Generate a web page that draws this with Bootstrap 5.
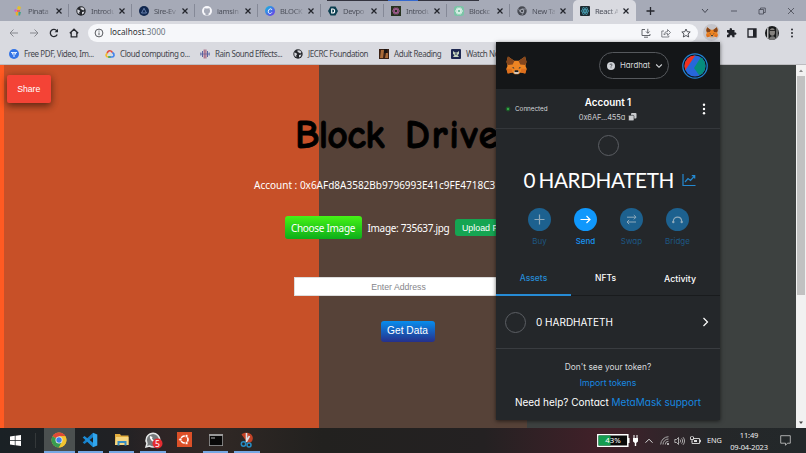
<!DOCTYPE html>
<html lang="en">
<head>
  <meta charset="UTF-8" />
  <meta name="viewport" content="width=device-width, initial-scale=1" />
  <title>React App</title>
  <link href="https://cdn.jsdelivr.net/npm/bootstrap@5.3.0/dist/css/bootstrap.min.css" rel="stylesheet" />
  <style>
    body { width: 806px; height: 453px; font-family: "Noto Sans", "Open Sans", sans-serif; font-size: 8px; line-height: 1; }
    svg { display: block; flex: none; overflow: visible; }

    /* browser chrome */
    .tab-strip { height: 21px; padding-left: 6px; background: #a6aab7; }
    .browser-tab { width: 63px; flex: none; padding-left: 7px; height: 21px; color: #4d505b; }
    .browser-tab::after { content: ""; width: 1px; height: 13px; background: #858997; margin-left: 5.5px; }
    .browser-tab .tab-label { width: 23px; flex: none; margin: 0 3.5px 0 5px; height: 12px; font-size: 7.6px; line-height: 12px; white-space: nowrap; letter-spacing: -.35px;
      -webkit-mask-image: linear-gradient(90deg, #000 60%, rgba(0,0,0,.2)); mask-image: linear-gradient(90deg, #000 60%, rgba(0,0,0,.2)); }
    .browser-tab.current { background: #d9dae0; border-radius: 5px 5px 0 0; }
    .browser-tab.current::after, .browser-tab.before-current::after { background: transparent; }
    .new-tab { margin-left: 9px; }
    .other-window { top: 0; left: 327px; width: 152px; height: 1px; background: linear-gradient(90deg, #34343f 61px, #3569cf 61px 91px, #34343f 91px); }
    .window-buttons { gap: 18.6px; padding-right: 10px; }
    .address-row { height: 23px; background: #d9dae0; padding-left: 9px; }
    .nav-icons { gap: 10px; }
    .address-box { width: 610px; height: 18px; margin-left: 9px; padding: 0 7px 0 6px; border-radius: 9px; background: #f6f7fa; }
    .address-text { font-size: 8.2px; margin-left: 6px; color: #303238; }
    .box-icons { gap: 10px; }
    .ext-icons { margin-left: 5px; }
    .ext-fox { width: 17px; height: 17px; background: #c4c4ca; }
    .ext-puzzle { margin-left: 6px; }
    .ext-panel { margin-left: 10px; }
    .ext-profile { margin-left: 8px; }
    .ext-more { margin-left: 11px; }
    .bookmarks { height: 21px; padding-left: 9px; background: #d9dae0; color: #45474e; border-bottom: 1px solid #bcbcc0; }
    .bookmark { gap: 5px; flex: none; white-space: nowrap; letter-spacing: -.42px; }
    .w96 { width: 96px; } .w95 { width: 95px; } .w93 { width: 93px; } .w86 { width: 86px; } .w72 { width: 72px; }

    /* dapp page */
    .dapp { height: 363px; background: linear-gradient(90deg, #ff5a22 4.5px, #c75028 4.5px 319.5px, #564238 319.5px 527px, #3d4140 527px); }
    .dapp-body { padding-left: 7px; }
    .share-btn { width: 43.5px; height: 28px; margin-top: 10px; border-radius: 2px; background: #f44336; box-shadow: 0 3px 7px rgba(0,0,0,.42), 0 1px 10px rgba(0,0,0,.2); color: #fff; font: 8.7px "Liberation Sans", sans-serif; }
    .block-title { margin: 7px 0 0 288px; height: 50px; font: 700 40px/50px "Comic Sans MS", "Comic Neue", Lato, sans-serif; color: #000; white-space: nowrap; -webkit-text-stroke: .8px #000; paint-order: stroke; stroke-linejoin: round; }
    .block-title .word-1 { letter-spacing: -.8px; }
    .block-title .word-2 { letter-spacing: 1.6px; margin-left: 7px; }
    .account-line { margin: 18px 0 0 247px; height: 14px; line-height: 14px; font-size: 10px; color: #fff; white-space: nowrap; }
    .upload-row { margin: 23.5px 0 0 277.5px; height: 24px; font-size: 10px; color: #fff; white-space: nowrap; }
    .choose-btn { width: 77px; height: 23px; border-radius: 3px; background: linear-gradient(#46f316, #0cad1a); letter-spacing: -.3px; }
    .picked-file { margin-left: 6px; letter-spacing: -.32px; }
    .upload-btn { width: 62px; height: 17px; border-radius: 3px; background: #15a552; margin-left: 6px; padding: 0 0 0 6.5px; font: 8.9px "Liberation Sans", sans-serif; }
    .addr-input { width: 209px; height: 19px; margin: 37.5px 0 0 287px; border: 1px solid #ddd; border-radius: 0; padding: 0; text-align: center; font: 8.7px "Liberation Sans", sans-serif; }
    .addr-input::placeholder { color: #85858a; }
    .get-btn { width: 54px; height: 21px; margin: 25px 0 0 373.5px; border-radius: 3px; background: linear-gradient(#078ded, #26308b); color: #fff; font: 10.2px/17px "Liberation Sans", sans-serif; padding: 0 0 3px; }
    .page-scroll { width: 10px; background: #f1f1f1; }
    .page-scroll .thumb { height: 219px; margin: 0 1px; background: #c1c1c1; }

    /* wallet popup */
    .wallet { left: 496px; top: 42px; width: 224px; height: 378px; background: #24272a; color: #fff; font-family: Inter, Lato, sans-serif; font-feature-settings: "cv11", "ss03"; box-shadow: 0 1px 4px rgba(0,0,0,.6); }
    .wallet-head { height: 47px; background: #141618; padding: 0 12px 0 10px; }
    .network { width: 70px; height: 27px; border: 1px solid #55585c; margin-left: 72px; padding: 0 5px 0 7px; font-size: 7.9px; color: #d6d9dc; letter-spacing: -.05px; }
    .network-name { margin-left: 5px; }
    .identicon { width: 26px; height: 26px; margin-left: 12.5px; }
    .wallet-account { height: 40px; border-bottom: 1px solid #34373b; }
    .connected { width: 76px; padding: 1px 0 0 9px; gap: 4px; font-size: 6.3px; color: #d6d9dc; }
    .acct { width: 72px; padding-top: 2px; }
    .acct-name { font-size: 9.8px; font-weight: 600; }
    .acct-hash { font-size: 7.5px; gap: 3px; color: #c9cbce; margin-top: 6px; letter-spacing: -.12px; }
    .acct-menu { margin-right: 14px; }
    .token-ring { width: 21px; height: 21px; border: 1px solid #5b5e63; border-radius: 50%; }
    .main-token { margin-top: 6px; }
    .balance { height: 28px; margin-top: 10px; font: 20.7px/28px Lato, sans-serif; white-space: nowrap; padding-left: 27.5px; }
    .balance-unit { letter-spacing: -.35px; margin-left: 3px; }
    .actions { margin: 14px 20px 0; padding-left: .5px; }
    .action { width: 46px; flex: none; gap: 6px; font-size: 8px; color: #1d5885; }
    .action .disc { width: 23px; height: 23px; border-radius: 50%; background: #1d618f; color: #8faabb; }
    .action.live { color: #1795f4; font-weight: 500; }
    .action.live .disc { background: #1098fc; color: #fff; }
    .wallet-tabs { height: 37px; margin-top: 14px; border-bottom: 1px solid #191b1d; font-size: 8.5px; font-weight: 500; }
    .wallet-tabs div { width: 75px; text-align: center; line-height: 39px; border-bottom: 2px solid transparent; height: 37px; }
    .wallet-tabs .tab-nfts { width: 69px; }
    .wallet-tabs .tab-activity { width: 80px; font-size: 8.8px; }
    .wallet-tabs .chosen { color: #268bd5; border-color: #268bd5; }
    .asset { height: 53px; gap: 10px; padding: 0 11px 0 9px; border-bottom: 1px solid #393c40; font-size: 10px; }
    .foot-q { margin-top: 13px; font-size: 8.4px; color: #d6d9dc; line-height: 11px; }
    .foot-import { margin-top: 5px; font-size: 8.7px; line-height: 11px; color: #1787e0; }
    .foot-help { margin-top: 6px; font-size: 10px; line-height: 14px; white-space: nowrap; }
    .foot-help span { color: #1787e0; }

    /* taskbar */
    .taskbar { height: 25px; background: linear-gradient(90deg, #1a2125, #202124 14%, #2d2425 20%, #302825 27%, #22211f 40%, #242122 60%, #422029 75%, #34242a 81%, #252729 88%, #23282a); color: #eee; }
    .start { width: 43.5px; padding-left: 10px; }
    .start-line { width: 1px; height: 15px; background: #34383a; }
    .task { width: 31.3px; height: 25px; border-bottom: 2px solid transparent; position: relative; }
    .task.running::after { content: ""; position: absolute; bottom: -2px; left: 3px; right: 3px; height: 2px; background: #76a8e4; }
    .task.active { background: #4b5050; }
    .task.active::after { left: 0; right: 0; }
    .tray { width: 209px; }
    .tray-plug { margin-left: 2px; }
    .tray-up { margin-left: 6px; }
    .tray-wifi { margin-left: 7px; }
    .tray-item { margin-left: 5px; }
    .tray-lang { width: 15px; margin-left: 6px; font-size: 7.3px; letter-spacing: -.1px; }
    .clock { width: 44px; margin-left: 5px; text-align: center; line-height: 12px; font-size: 7.5px; letter-spacing: -.15px; white-space: nowrap; }
    .tray-note { margin-right: 15px; }
  </style>
</head>
<body class="overflow-hidden position-relative d-flex flex-column m-0">

  <svg width="0" height="0" class="position-absolute">
    <defs>
      <symbol id="x" viewBox="0 0 8 8"><path d="M1.5 1.5l5 5M6.5 1.5l-5 5" stroke="#22242b" stroke-width="1.2" /></symbol>
      <symbol id="globe" viewBox="0 0 10 10"><circle cx="5" cy="5" r="4.7" fill="#24262b" /><path d="M1.2 3.5l2 .4 1 1.4-1 1 .2 2L1.5 6.8zM4.5 1.2l2.5.2L8.5 3 7.300 4.500 5.800 3.500 4.600 3zM6 6l2.500-.5-.8 2L6 8.500z" fill="#d5d6dc" /></symbol>
      <symbol id="fox" viewBox="0 0 22 20">
        <path d="M2 .5L8.500 5h5L20 .5 21.500 6l-1 4.500 1.200 3-1.500 5-4.800-1.200-2.400 1.900H9l-2.400-1.900-4.800 1.200-1.500-5 1.200-3L.5 6z" fill="#ec8423" />
        <path d="M2 .5L8.800 5.300 7 9 1.600 9.500.5 6zM20 .5l-6.800 4.800L15 9l5.400.5L21.500 6z" fill="#84461d" />
        <path d="M.3 13.500h5.500l.8 3.800-4.800 1.200zM21.700 13.500h-5.500l-.8 3.800 4.800 1.200z" fill="#dd6f1d" />
        <path d="M6 12.300l2.700 1.200-.4-1.700zM16 12.300l-2.700 1.200.4-1.700z" fill="#233447" />
        <path d="M8 16.500l1.200-1h3.600l1.200 1-1.200 2.500H9.200z" fill="#d2c5b8" /><path d="M9.300 15h3.400l.4 1.800H8.900z" fill="#1b1b1b" />
      </symbol>
      <symbol id="openai" viewBox="0 0 10 10"><g fill="none" stroke="currentColor" stroke-width=".8"><ellipse cx="5" cy="5" rx="3.500" ry="1.700" /><ellipse cx="5" cy="5" rx="3.500" ry="1.700" transform="rotate(60 5 5)" /><ellipse cx="5" cy="5" rx="3.500" ry="1.700" transform="rotate(120 5 5)" /></g></symbol>
    </defs>
  </svg>

  <!-- tabs -->
  <div class="tab-strip d-flex align-items-center flex-shrink-0">
    <div class="browser-tab d-flex align-items-center">
      <svg width="10" height="10" viewBox="0 0 10 10"><path d="M5 0l3 1-1 3-3-1z" fill="#e6c02c" /><path d="M2 3l2 1-1 2-2-1z" fill="#d55fc0" /><path d="M4 4l3 0 0 2-3 0z" fill="#e66b54" /><path d="M2.500 6h2.500v3.500H3z" fill="#e5b22c" /><path d="M5.500 6H8L7 9.500H5.500z" fill="#42a08b" /></svg>
      <div class="tab-label">Pinata</div><svg width="8" height="8"><use href="#x" /></svg>
    </div>
    <div class="browser-tab d-flex align-items-center">
      <svg width="10" height="10"><use href="#globe" /></svg>
      <div class="tab-label">Introdu</div><svg width="8" height="8"><use href="#x" /></svg>
    </div>
    <div class="browser-tab d-flex align-items-center">
      <svg width="10" height="10" viewBox="0 0 10 10"><circle cx="5" cy="5" r="5" fill="#12284f" /><path d="M5 2.300L7.500 7h-5z" fill="none" stroke="#8aa4d4" stroke-width=".7" /></svg>
      <div class="tab-label">Sire-Ev</div><svg width="8" height="8"><use href="#x" /></svg>
    </div>
    <div class="browser-tab d-flex align-items-center">
      <svg width="10" height="10" viewBox="0 0 10 10"><circle cx="5" cy="5" r="5" fill="#f8f8fb" /><path d="M3.500 9.500V7.500C1.500 7 1.800 3.800 2.500 3.300V2l1.300.6h2.400L7.500 2v1.300C8.200 3.800 8.500 7 6.500 7.500v2z" fill="#a6aab7" /></svg>
      <div class="tab-label">iamsin</div><svg width="8" height="8"><use href="#x" /></svg>
    </div>
    <div class="browser-tab d-flex align-items-center">
      <svg width="10" height="10" viewBox="0 0 10 10"><defs><linearGradient id="cv" x2="1" y2="1"><stop stop-color="#13bfe0" /><stop offset="1" stop-color="#7130e8" /></linearGradient></defs><circle cx="5" cy="5" r="5" fill="url(#cv)" /><path d="M6.800 3.800C6.500 2 3.300 2.800 3.300 5.500s2.500 2.500 3.500 1" fill="none" stroke="#fff" /></svg>
      <div class="tab-label">BLOCK</div><svg width="8" height="8"><use href="#x" /></svg>
    </div>
    <div class="browser-tab d-flex align-items-center">
      <svg width="10" height="10" viewBox="0 0 10 10"><path d="M2.500.5h5L10 5 7.500 9.500h-5L0 5z" fill="#0c3f50" /><path d="M3.700 3v4h1c2.600 0 2.600-4 0-4z" fill="none" stroke="#fff" stroke-width="1.100" /></svg>
      <div class="tab-label">Devpo</div><svg width="8" height="8"><use href="#x" /></svg>
    </div>
    <div class="browser-tab d-flex align-items-center">
      <svg width="10" height="10" viewBox="0 0 10 10" color="#ad619a"><path d="M0 0h10v10H0z" fill="#26321f" /><use href="#openai" /></svg>
      <div class="tab-label">Introdu</div><svg width="8" height="8"><use href="#x" /></svg>
    </div>
    <div class="browser-tab d-flex align-items-center">
      <svg width="10" height="10" viewBox="0 0 10 10" color="#e5f5ee"><rect width="10" height="10" rx="2.500" fill="#7cc4a7" /><use href="#openai" /></svg>
      <div class="tab-label">Blockc</div><svg width="8" height="8"><use href="#x" /></svg>
    </div>
    <div class="browser-tab before-current d-flex align-items-center">
      <svg width="10" height="10" viewBox="0 0 10 10"><circle cx="5" cy="5" r="4.700" fill="#484b53" /><path d="M5 3h4M3.300 6L1.300 2.600M6.700 6L4.700 9.500" stroke="#a6aab7" stroke-width=".7" /><circle cx="5" cy="5" r="1.800" fill="#484b53" stroke="#c3c6d0" stroke-width=".8" /></svg>
      <div class="tab-label">New Ta</div><svg width="8" height="8"><use href="#x" /></svg>
    </div>
    <div class="browser-tab current d-flex align-items-center">
      <svg width="10" height="10" viewBox="0 0 10 10"><rect width="10" height="10" rx="1" fill="#1e2a31" /><g fill="none" stroke="#4fb6cb" stroke-width=".6"><ellipse cx="5" cy="5" rx="4" ry="1.500" /><ellipse cx="5" cy="5" rx="4" ry="1.500" transform="rotate(60 5 5)" /><ellipse cx="5" cy="5" rx="4" ry="1.500" transform="rotate(120 5 5)" /></g><circle cx="5" cy="5" r=".8" fill="#4fb6cb" /></svg>
      <div class="tab-label">React A</div><svg width="8" height="8"><use href="#x" /></svg>
    </div>
    <svg class="new-tab" width="11" height="10" viewBox="0 0 11 10"><path d="M1.500 5h8M5.500 1v8" stroke="#24262d" stroke-width="1.300" /></svg>
    <div class="window-buttons d-flex align-items-center ms-auto">
      <svg width="10" height="10" viewBox="0 0 10 10"><path d="M2 3l3 3.500L8 3" fill="none" stroke="#454853" /></svg>
      <svg width="10" height="10" viewBox="0 0 10 10"><path d="M2 5h6" stroke="#454853" stroke-width=".8" /></svg>
      <svg width="10" height="10" viewBox="0 0 10 10"><path d="M2 3.500h4.500V8H2zM3.500 3.500V2h4.800v4.500H6.500" fill="none" stroke="#454853" stroke-width=".8" /></svg>
      <svg width="10" height="10" viewBox="0 0 10 10"><path d="M2 2l6 6M8 2L2 8" stroke="#454853" stroke-width=".8" /></svg>
    </div>
  </div>
  <div class="other-window position-absolute"></div>

  <!-- address bar -->
  <div class="address-row d-flex align-items-center flex-shrink-0">
    <div class="nav-icons d-flex align-items-center">
      <svg width="10" height="10" viewBox="0 0 10 10"><path d="M9 5H1M4.500 1.500L1 5l3.500 3.500" fill="none" stroke="#85878d" /></svg>
      <svg width="10" height="10" viewBox="0 0 10 10"><path d="M1 5h8M5.500 1.500L9 5 5.500 8.500" fill="none" stroke="#85878d" /></svg>
      <svg width="10" height="10" viewBox="0 0 10 10"><path d="M8.200 6.500A3.600 3.600 0 1 1 7.800 2.800" fill="none" stroke="#26282e" stroke-width="1.300" /><path d="M9 .8v3.400H5.600z" fill="#26282e" /></svg>
      <svg width="10" height="10" viewBox="0 0 10 10"><path d="M.8 5.300L5 1.200l4.200 4.100M2.200 4.500v4.300h5.600V4.500" fill="none" stroke="#26282e" stroke-width="1.300" /></svg>
    </div>
    <div class="address-box d-flex align-items-center">
      <svg width="10" height="10" viewBox="0 0 10 10"><circle cx="5" cy="5" r="3.900" fill="none" stroke="#45474d" stroke-width=".9" /><path d="M5 4.500v2.700M5 2.600v1" stroke="#45474d" stroke-width=".9" /></svg>
      <div class="address-text">localhost<span class="text-secondary">:3000</span></div>
      <div class="box-icons d-flex ms-auto">
        <svg width="10" height="10" viewBox="0 0 10 10"><path d="M4 1.500H1v6h8V6M3 9.200h4M6.800.8v4.400M5 3.500l1.800 1.800 1.800-1.800" fill="none" stroke="#54565c" stroke-width=".9" /></svg>
        <svg width="10" height="10" viewBox="0 0 10 10"><path d="M3 3H.8v6h7V7.500M3 7c0-2.500 1.500-3.300 3.500-3.300V1.500L9.500 4.500l-3 2.800V5.500C5 5.500 4 6 3 7z" fill="none" stroke="#66686e" stroke-width=".8" /></svg>
        <svg width="10" height="10" viewBox="0 0 10 10"><path d="M5 1l1.200 2.700 3 .3L7 6l.7 3L5 7.500 2.300 9 3 6 .8 4l3-.3z" fill="none" stroke="#404248" stroke-width=".9" /></svg>
      </div>
    </div>
    <div class="ext-icons d-flex align-items-center">
      <div class="ext-fox rounded-circle d-flex align-items-center justify-content-center"><svg width="12" height="11"><use href="#fox" /></svg></div>
      <svg class="ext-puzzle" width="11" height="11" viewBox="0 0 11 11"><path d="M1 3h2.700c-.8-2.800 3-2.800 2.300 0h2.500v2.500c2.600-.6 2.600 2.800 0 2.300v2.400H6.300C6.800 7.600 3.200 7.600 3.700 10.200H1V7.800c2.200.2 2.200-2.500 0-2.300z" fill="#202228" /></svg>
      <svg class="ext-panel" width="10" height="10" viewBox="0 0 10 10"><path d="M1 1h8v8H1z" fill="none" stroke="#202228" stroke-width="1.300" /><path d="M6 1h3v8H6z" fill="#202228" /></svg>
      <svg class="ext-profile" width="14" height="14" viewBox="0 0 14 14"><defs><clipPath id="pf"><circle cx="7" cy="7" r="7" /></clipPath></defs><g clip-path="url(#pf)"><path d="M0 0h14v14H0z" fill="#17191a" /><path d="M2 0h1.500v14H2zM11.500 0h1v14h-1z" fill="#c0c0c0" /><ellipse cx="7.300" cy="6" rx="2.700" ry="3.800" fill="#85827f" /><path d="M4 14c0-5 7-5 7 0z" fill="#777" /><path d="M5 4.500h5" stroke="#282828" /></g></svg>
      <svg class="ext-more" width="4" height="12" viewBox="0 0 4 12"><g fill="#2a2c32"><circle cx="2" cy="2.500" r="1" /><circle cx="2" cy="6" r="1" /><circle cx="2" cy="9.500" r="1" /></g></svg>
    </div>
  </div>

  <!-- bookmarks -->
  <div class="bookmarks d-flex align-items-center flex-shrink-0">
    <div class="bookmark w96 d-flex align-items-center"><svg width="10" height="10" viewBox="0 0 10 10"><circle cx="5" cy="5" r="5" fill="#3374e6" /><path d="M2 3.500h6M3.500 3.500v2M6.500 3.500v2M5 4v4" stroke="#dcebff" stroke-width="1.100" /></svg>Free PDF, Video, Im...</div>
    <div class="bookmark w95 d-flex align-items-center"><svg width="10" height="10" viewBox="0 0 10 10" fill="none" stroke-width="1.700"><path d="M2.200 4.300C2.800 1 6.500 1 7.500 3.700" stroke="#e34b3c" /><path d="M7.400 3.500C10 5 9.300 8 7 8H5" stroke="#4385ec" /><path d="M5.500 8H3" stroke="#38a457" /><path d="M3.300 8C.8 8 .3 5.500 2.400 4.300" stroke="#f2bb29" /></svg>Cloud computing o...</div>
    <div class="bookmark w93 d-flex align-items-center"><svg width="10" height="10" viewBox="0 0 10 10"><path d="M.8 3.500v3M2.500 2v6M7.500 2v6M9.200 3.500v3" stroke="#5866a1" /><path d="M4.200.5v9M5.900.5v9" stroke="#9b4b6c" /><path d="M1 5h8" stroke="#5f5f9e" stroke-width=".7" /></svg>Rain Sound Effects...</div>
    <div class="bookmark w86 d-flex align-items-center"><svg width="10" height="10"><use href="#globe" /></svg>JECRC Foundation</div>
    <div class="bookmark w72 d-flex align-items-center"><svg width="10" height="10" viewBox="0 0 10 10"><path d="M0 0h10v10H0z" fill="#3a2115" /><path d="M2 1h3l-1 8H1zM7 4h2v5H6z" fill="#a96a38" /><path d="M5 0h3v4H5z" fill="#191312" /></svg>Adult Reading</div>
    <div class="bookmark d-flex align-items-center"><svg width="10" height="10" viewBox="0 0 10 10"><rect width="10" height="10" rx="1" fill="#1d2750" /><path d="M2 2l2 1.500h2L8 2v3L6.500 6 8 8H2l1.500-2L2 5z" fill="#c5d4bd" /><path d="M4 5h2" stroke="#1d2750" /></svg>Watch Now</div>
  </div>

  <!-- page -->
  <main class="dapp d-flex flex-shrink-0">
    <div class="dapp-body flex-grow-1 overflow-hidden">
      <button class="share-btn border-0 d-block p-0">Share</button>
      <h1 class="block-title"><span class="word-1">Block</span> <span class="word-2">Drive</span></h1>
      <p class="account-line mb-0">Account : 0x6AFd8A3582Bb9796993E41c9FE4718C3</p>
      <div class="upload-row d-flex align-items-center">
        <label class="choose-btn d-flex align-items-center justify-content-center">Choose Image</label>
        <span class="picked-file">Image: 735637.jpg</span>
        <button class="upload-btn border-0 text-white text-start">Upload File</button>
      </div>
      <input class="addr-input d-block" type="text" placeholder="Enter Address" />
      <button class="get-btn border-0 d-block">Get Data</button>
    </div>
    <div class="page-scroll d-flex flex-column">
      <svg width="10" height="11" viewBox="0 0 10 11"><path d="M3 7l2-2.500L7 7z" fill="#888" /></svg>
      <div class="thumb"></div>
      <svg class="mt-auto" width="10" height="11" viewBox="0 0 10 11"><path d="M3 4.500h4L5 7z" fill="#444" /></svg>
    </div>
  </main>

  <!-- wallet popup -->
  <section class="wallet position-absolute">
    <div class="wallet-head d-flex align-items-center">
      <svg width="21" height="19"><use href="#fox" /></svg>
      <div class="network rounded-pill d-flex align-items-center">
        <svg width="8" height="8" viewBox="0 0 8 8"><circle cx="4" cy="4" r="4" fill="#cfd2d6" /><path d="M2.900 3c.2-1.500 2.300-1.200 2.200 0-.1.800-1.100.8-1.100 1.700M4 5.400v.8" fill="none" stroke="#383b40" stroke-width=".8" /></svg>
        <span class="network-name">Hardhat</span>
        <svg class="ms-auto" width="8" height="8" viewBox="0 0 8 8"><path d="M1.200 2.500L4 5.300l2.800-2.800" fill="none" stroke="#d6d9dc" stroke-width="1.100" /></svg>
      </div>
      <svg class="identicon" viewBox="0 0 26 26"><defs><clipPath id="ic"><circle cx="13" cy="13" r="10.500" /></clipPath></defs><circle cx="13" cy="13" r="12.200" fill="#101417" stroke="#2282d2" stroke-width="1.300" /><g clip-path="url(#ic)"><path d="M0 0h26v26H0z" fill="#2767db" /><path d="M0 0h15L2 19z" fill="#f2321f" /><path d="M19 4l7 2v15l-9 1-5-7z" fill="#068d7d" /></g></svg>
    </div>
    <div class="wallet-account d-flex align-items-center">
      <div class="connected d-flex align-items-center"><svg width="6" height="6" viewBox="0 0 6 6"><circle cx="3" cy="3" r="2.400" fill="#1b5128" /><circle cx="3" cy="3" r="1.200" fill="#35a745" /></svg><span>Connected</span></div>
      <div class="acct text-center">
        <div class="acct-name">Account 1</div>
        <div class="acct-hash d-flex justify-content-center align-items-center">0x6AF...455a<svg width="9" height="8" viewBox="0 0 9 8"><rect x="3" width="5.500" height="5.500" rx="1" fill="#c9cbce" /><rect x=".5" y="2.300" width="5.500" height="5.500" rx="1" fill="#c9cbce" stroke="#24272a" stroke-width=".6" /></svg></div>
      </div>
      <svg class="acct-menu ms-auto" width="4" height="12" viewBox="0 0 4 12"><g fill="#fff"><circle cx="2" cy="1.800" r="1.200" /><circle cx="2" cy="6" r="1.200" /><circle cx="2" cy="10.200" r="1.200" /></g></svg>
    </div>
    <div class="token-ring main-token mx-auto"></div>
    <div class="balance d-flex align-items-center">0<span class="balance-unit">HARDHATETH</span>
      <svg class="ms-2" width="14" height="14" viewBox="0 0 14 14"><path d="M1 1v11.500h12.500M3 9l3-3.500 2.500 2L12.500 3M9.800 2.700h2.900v2.900" fill="none" stroke="#2489d1" stroke-width="1.200" /></svg>
    </div>
    <div class="actions d-flex">
      <div class="action d-flex flex-column align-items-center"><div class="disc d-flex align-items-center justify-content-center"><svg width="13" height="13" viewBox="0 0 13 13"><path d="M6.500 1.500v10M1.500 6.500h10" stroke="currentColor" stroke-width="1.200" /></svg></div>Buy</div>
      <div class="action live d-flex flex-column align-items-center"><div class="disc d-flex align-items-center justify-content-center"><svg width="13" height="13" viewBox="0 0 13 13"><path d="M1.500 6.500h9.500M7.500 3L11 6.500 7.500 10" fill="none" stroke="currentColor" stroke-width="1.200" /></svg></div>Send</div>
      <div class="action d-flex flex-column align-items-center"><div class="disc d-flex align-items-center justify-content-center"><svg width="13" height="13" viewBox="0 0 13 13"><path d="M2 4.200h9M8.800 2L11 4.200 8.800 6.400M11 9H2M4.200 6.800L2 9l2.200 2.200" fill="none" stroke="currentColor" /></svg></div>Swap</div>
      <div class="action d-flex flex-column align-items-center"><div class="disc d-flex align-items-center justify-content-center"><svg width="13" height="13" viewBox="0 0 13 13"><path d="M2.300 8.500C2.300 2.700 10.700 2.700 10.700 8.500" fill="none" stroke="currentColor" stroke-width="1.100" /><circle cx="2.300" cy="9" r="1.200" fill="currentColor" /><circle cx="10.700" cy="9" r="1.200" fill="currentColor" /></svg></div>Bridge</div>
    </div>
    <div class="wallet-tabs d-flex"><div class="chosen">Assets</div><div class="tab-nfts">NFTs</div><div class="tab-activity">Activity</div></div>
    <div class="asset d-flex align-items-center">
      <div class="token-ring"></div><span>0 HARDHATETH</span>
      <svg class="ms-auto" width="7" height="10" viewBox="0 0 7 10"><path d="M1.500 1l4 4-4 4" fill="none" stroke="#fff" stroke-width="1.200" /></svg>
    </div>
    <div class="text-center">
      <div class="foot-q">Don't see your token?</div>
      <div class="foot-import">Import tokens</div>
      <div class="foot-help">Need help? Contact <span>MetaMask support</span></div>
    </div>
  </section>

  <!-- taskbar -->
  <footer class="taskbar d-flex flex-shrink-0">
    <div class="start d-flex align-items-center">
      <svg width="11" height="11" viewBox="0 0 11 11"><path d="M0 1.500L4.800.8v4.400H0zM5.500.7L11 0v5.200H5.500zM0 5.900h4.800v4.400L0 9.600zM5.500 5.900H11V11l-5.500-.7z" fill="#fff" /></svg>
      <div class="start-line ms-auto me-2"></div>
    </div>
    <div class="task active running d-flex align-items-center justify-content-center"><svg width="16" height="16" viewBox="0 0 16 16"><circle cx="8" cy="8" r="7.500" fill="#f0c02e" /><path d="M8 8L1.500 4.300A7.500 7.500 0 0 1 14.500 4.300H8z" fill="#df4936" /><path d="M8 8L1.500 4.250A7.500 7.500 0 0 0 8 15.500L11 9.500z" fill="#389c50" /><path d="M11.200 9.800L8 15.500A7.500 7.500 0 0 0 14.500 4.300H8z" fill="#f3c431" /><circle cx="8" cy="8" r="3.500" fill="#eee" /><circle cx="8" cy="8" r="2.700" fill="#3c7fe8" /></svg></div>
    <div class="task running d-flex align-items-center justify-content-center"><svg width="16" height="16" viewBox="0 0 16 16"><path d="M11 .7l4.300 1.900v10.800L11 15.300z" fill="#31a6ed" /><path d="M11 .7v4.500L2.500 12 .7 10.500z" fill="#1680ca" /><path d="M11 15.300v-4.500L2.500 4 .7 5.500z" fill="#1d8dd8" /></svg></div>
    <div class="task running d-flex align-items-center justify-content-center"><svg width="14" height="13" viewBox="0 0 14 13"><path d="M0 1h5l1 1.500h7.500V12H0z" fill="#e3ae3e" /><path d="M1 4h12.500v8H0z" fill="#f5d681" /><path d="M2.500 12.500V8h9v4.500h-2V10h-5v2.500z" fill="#378dc2" /></svg></div>
    <div class="task running d-flex align-items-center justify-content-center"><svg width="17" height="16" viewBox="0 0 17 16"><path d="M1 15l1-3.500A6.800 6.800 0 1 1 4.500 14z" fill="#777b7d" stroke="#e7e9e9" stroke-width="1.500" /><path d="M5 4c-1 3 3 7 6 6l-1-2-1.500.5L7 6.500 7.500 5z" fill="#fff" /><circle cx="12.500" cy="11.500" r="5" fill="#e52c31" /><text x="12.500" y="14.500" font-size="8.500" text-anchor="middle" fill="#fff">5</text></svg></div>
    <div class="task d-flex align-items-center justify-content-center"><svg width="15" height="15" viewBox="0 0 15 15"><path d="M0 0h15v15H0z" fill="#dc5028" /><circle cx="7.500" cy="7.500" r="3.500" fill="none" stroke="#fff" stroke-width="1.700" /><g fill="#fff" stroke="#dc5028" stroke-width=".7"><circle cx="3.300" cy="7.500" r="1.500" /><circle cx="9.600" cy="3.900" r="1.500" /><circle cx="9.600" cy="11.100" r="1.500" /></g></svg></div>
    <div class="task running d-flex align-items-center justify-content-center"><svg width="14" height="12" viewBox="0 0 14 12"><path d="M0 0h14v12H0z" fill="#999" /><path d="M.8 2h12.400v9.200H.8z" fill="#080808" /><path d="M2 4h4" stroke="#ddd" stroke-width=".8" /></svg></div>
    <div class="task running d-flex align-items-center justify-content-center"><svg width="14" height="16" viewBox="0 0 14 16"><path d="M1.500 2.500C4-.5 12.500 0 12.800 6c.1 3-2 5-5 5z" fill="#c34327" /><path d="M6.500 1v9M9.500 4L6 10" stroke="#d9e2e8" stroke-width="1.600" /><g fill="none" stroke="#268dc5" stroke-width="1.500"><circle cx="3.500" cy="12" r="2.200" /><circle cx="9" cy="13" r="2" /></g></svg></div>

    <div class="tray d-flex align-items-center ms-auto">
      <svg width="33" height="13" viewBox="0 0 33 13"><path d="M.8.8h30v11.400H.8z" fill="#0b0b0b" stroke="#fff" stroke-width="1.500" /><path d="M1.500 1.500h12v10h-12z" fill="#159d50" /><path d="M31 4h1.500v5H31z" fill="#fff" /><text x="16" y="9.300" font-size="7.800" text-anchor="middle" fill="#fff">43%</text></svg>
      <svg class="tray-plug" width="7" height="11" viewBox="0 0 7 11"><path d="M1 3h5v3.500L4.200 8v3H2.800V8L1 6.500zM1.500 0h1v3h-1zM4.500 0h1v3h-1z" fill="#fff" /></svg>
      <svg class="tray-up" width="8" height="8" viewBox="0 0 8 8"><path d="M.5 5.700L4 2.200l3.500 3.500" fill="none" stroke="#ddd" /></svg>
      <svg class="tray-wifi" width="9" height="9" viewBox="0 0 9 9"><g fill="none" stroke="#aaa"><path d="M.7 8.500A8 8 0 0 1 8.500.7M3 8.500A5.500 5.500 0 0 1 8.500 3M5.300 8.500a3.200 3.200 0 0 1 3.200-3.200" /></g><circle cx="8" cy="8" r="1" fill="#ddd" /></svg>
      <svg class="tray-item" width="11" height="10" viewBox="0 0 11 10"><path d="M.8 3.500h1.700L4.500 1.500v7l-2-2H.8zM6 3.500c.8 1 .8 2 0 3M7.600 2.400c1.400 1.700 1.400 3.500 0 5.200M9 1.200c2 2.300 2 5.300 0 7.600" fill="none" stroke="#ccc" stroke-width=".8" /></svg>
      <svg class="tray-item" width="11" height="9" viewBox="0 0 11 9"><path d="M3 2.500h6.500v5H2V5M9.500 4h1v2h-1M.5 1v2.500h3V1M1.200 0v1M2.800 0v1M2 3.500v2" fill="none" stroke="#ddd" stroke-width=".9" /><path d="M4 4h3v2H4z" fill="#ddd" /></svg>
      <span class="tray-lang">ENG</span>
      <div class="clock"><div>11:49</div><div>09-04-2023</div></div>
      <svg class="tray-note ms-auto" width="11" height="11" viewBox="0 0 11 11"><path d="M.7.7h9.600v7.500H7.500L5.500 10.300V8.200H.7z" fill="none" stroke="#ccc" stroke-width=".8" /></svg>
    </div>
  </footer>

  <script src="https://cdn.jsdelivr.net/npm/bootstrap@5.3.0/dist/js/bootstrap.bundle.min.js"></script>
</body>
</html>
